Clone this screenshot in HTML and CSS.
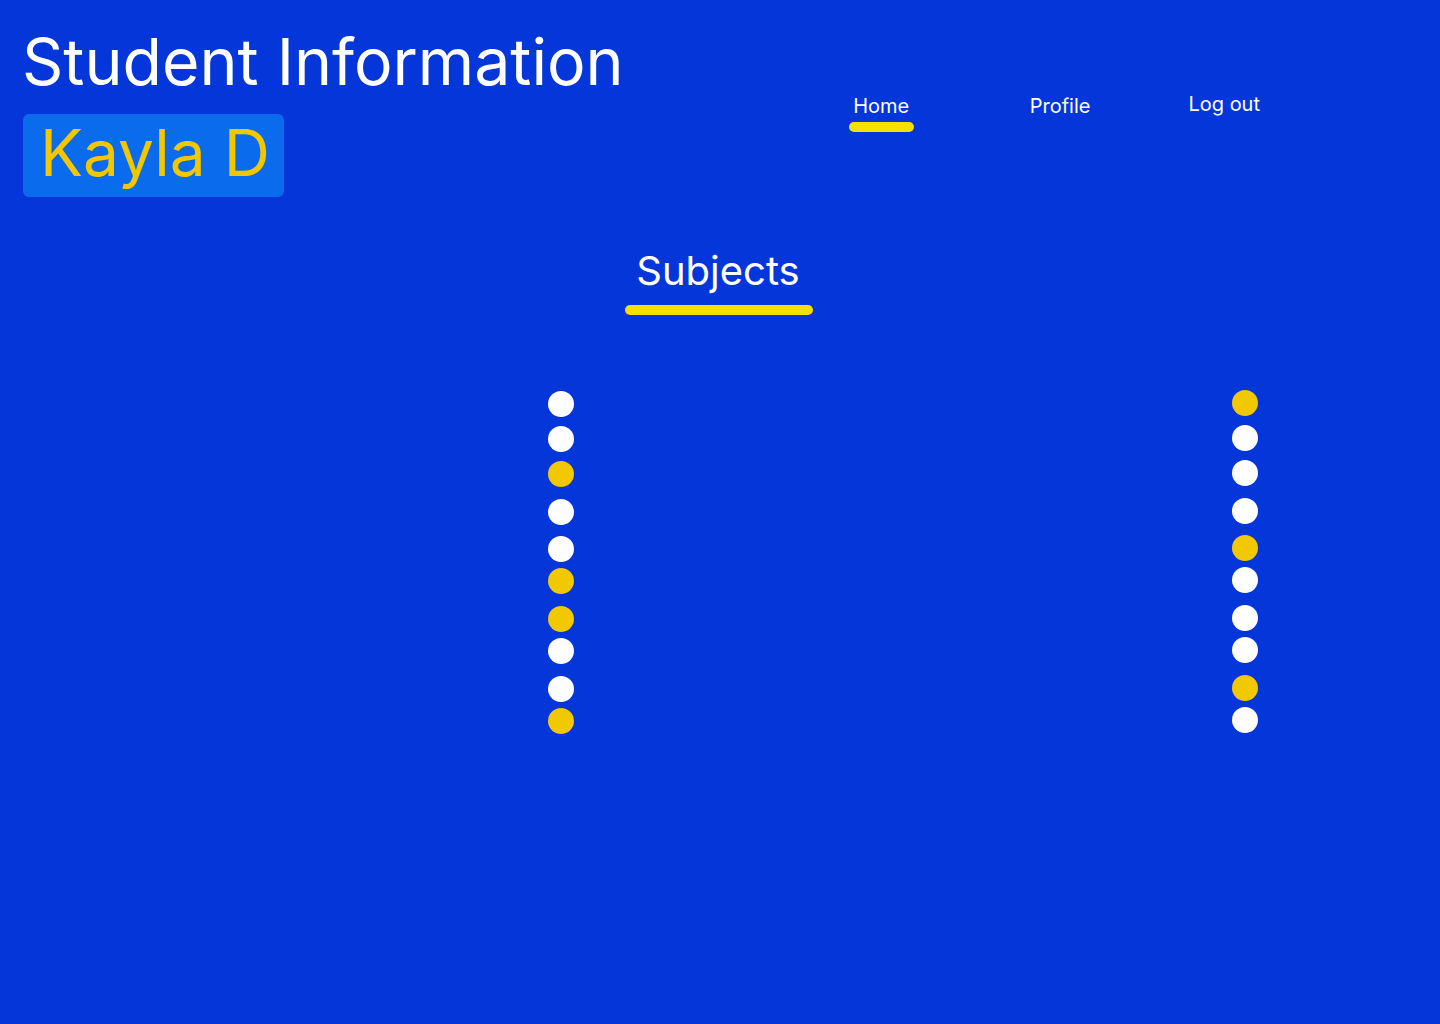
FILE: index.html
```html
<!DOCTYPE html>
<html lang="en">
<head>
<meta charset="utf-8">
<title>Student Information</title>
<link rel="stylesheet" href="styles.css">
</head>
<body>
<div class="page">
  <header class="header">
    <div class="identity">
      <h1 class="title">Student Information</h1>
      <div class="name-badge">Kayla D</div>
    </div>
    <nav class="nav">
      <a class="nav-item nav-home active" href="#">Home</a>
      <a class="nav-item nav-profile" href="#">Profile</a>
      <a class="nav-item nav-logout" href="#">Log out</a>
    </nav>
  </header>

  <section class="subjects">
    <h2 class="subjects-title">Subjects</h2>
    <div class="subjects-bar"></div>
  </section>

  <section class="dots">
    <div class="dot-col">
      <span class="dot"></span>
      <span class="dot"></span>
      <span class="dot on"></span>
      <span class="dot"></span>
      <span class="dot"></span>
      <span class="dot on"></span>
      <span class="dot on"></span>
      <span class="dot"></span>
      <span class="dot"></span>
      <span class="dot on"></span>
    </div>
    <div class="dot-col dot-col-right">
      <span class="dot on"></span>
      <span class="dot"></span>
      <span class="dot"></span>
      <span class="dot"></span>
      <span class="dot on"></span>
      <span class="dot"></span>
      <span class="dot"></span>
      <span class="dot"></span>
      <span class="dot on"></span>
      <span class="dot"></span>
    </div>
  </section>
</div>
</body>
</html>
```

FILE: styles.css
```css
* { box-sizing: border-box; }

html, body {
  margin: 0;
  padding: 0;
  background: #0436d9;
  font-family: Inter, "Noto Sans", sans-serif;
  color: #ffffff;
}

.page {
  width: 1440px;
  min-height: 1024px;
  background: #0436d9;
}

.header {
  display: flex;
  align-items: flex-start;
}

.identity {
  padding: 24px 0 0 22px;
  display: flex;
  flex-direction: column;
  align-items: flex-start;
}

.title {
  margin: 0;
  font-size: 64.4px;
  font-weight: 400;
  line-height: 77px;
  color: #ffffff;
  letter-spacing: 0;
}

.name-badge {
  margin-top: 13px;
  margin-left: 1px;
  height: 83px;
  padding: 0 14px 0 17px;
  background: #0a6bec;
  border-radius: 6px;
  color: #f2c700;
  font-size: 64px;
  line-height: 77px;
  font-weight: 400;
}

.nav {
  display: flex;
  align-items: flex-start;
  margin-left: auto;
  margin-right: 180px;
  padding-top: 94px;
}

.nav-item {
  display: flex;
  flex-direction: column;
  align-items: center;
  color: #ffffff;
  text-decoration: none;
  font-size: 20px;
  line-height: 24px;
}

.nav-home {
  width: 65px;
}

.nav-home.active::after {
  content: "";
  display: block;
  width: 65px;
  height: 10px;
  margin-top: 4px;
  border-radius: 5px;
  background: #f5e100;
}

.nav-profile {
  margin-left: 116px;
}

.nav-logout {
  margin-left: 98px;
  margin-top: -2px;
}

.subjects {
  display: flex;
  flex-direction: column;
  align-items: center;
  margin-top: 50px;
}

.subjects-title {
  margin: 0;
  font-size: 40px;
  font-weight: 400;
  line-height: 48px;
  color: #ffffff;
  position: relative;
  left: -2px;
}

.subjects-bar {
  width: 188px;
  height: 10px;
  margin-top: 10px;
  border-radius: 5px;
  background: #f5e100;
  position: relative;
  left: -1px;
}

.dots {
  display: flex;
  align-items: flex-start;
  gap: 658px;
  padding-left: 548px;
  margin-top: 76px;
}

.dot-col {
  display: flex;
  flex-direction: column;
}

.dot-col-right {
  margin-top: -1px;
}

.dot {
  display: block;
  width: 26px;
  height: 26px;
  border-radius: 50%;
  background: #ffffff;
}

.dot.on {
  background: #f2c800;
}

.dot:nth-child(2) { margin-top: 9px; }
.dot:nth-child(3) { margin-top: 9px; }
.dot:nth-child(4) { margin-top: 12px; }
.dot:nth-child(5) { margin-top: 11px; }
.dot:nth-child(6) { margin-top: 6px; }
.dot:nth-child(7) { margin-top: 12px; }
.dot:nth-child(8) { margin-top: 6px; }
.dot:nth-child(9) { margin-top: 12px; }
.dot:nth-child(10) { margin-top: 6px; }
```
